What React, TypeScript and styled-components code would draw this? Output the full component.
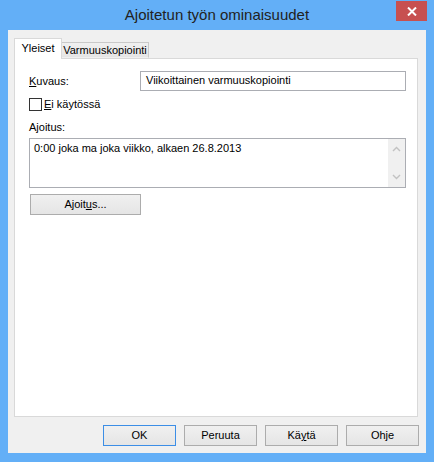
import React from "react";
import styled, { createGlobalStyle } from "styled-components";

const GlobalStyle = createGlobalStyle`
  html, body {
    margin: 0;
    padding: 0;
    width: 434px;
    height: 462px;
    overflow: hidden;
    background: #63aff7;
  }
  * { box-sizing: border-box; }
`;

const Window = styled.div`
  width: 434px;
  height: 462px;
  background: #63aff7;
  display: flex;
  flex-direction: column;
  font-family: "Liberation Sans", Arial, sans-serif;
  font-size: 11px;
  color: #000;
`;

const TitleBar = styled.div`
  position: relative;
  height: 30px;
  flex: none;
  display: flex;
  align-items: center;
  justify-content: center;
`;

const Title = styled.div`
  font-size: 15px;
  line-height: 30px;
  color: #222;
`;

const CloseButton = styled.div`
  position: absolute;
  top: 1px;
  right: 7px;
  width: 31px;
  height: 20px;
  background: #c75050;
  display: flex;
  align-items: center;
  justify-content: center;
`;

const Client = styled.div`
  flex: 1;
  margin: 0 8px 9px 8px;
  background: #f0f0f0;
  display: flex;
  flex-direction: column;
  padding: 8px 7px 7px 6px;
`;

const TabArea = styled.div`
  margin-right: 1px;
  display: flex;
  flex-direction: column;
`;

const TabStrip = styled.div`
  height: 20px;
  display: flex;
  align-items: flex-end;
  position: relative;
  z-index: 1;
`;

const Tab = styled.div<{ $selected?: boolean; $width: number }>`
  width: ${(p) => p.$width}px;
  height: ${(p) => (p.$selected ? 21 : 16)}px;
  margin-bottom: ${(p) => (p.$selected ? -1 : 0)}px;
  border: 1px solid ${(p) => (p.$selected ? "#d9d9d9" : "#c9c9c9")};
  border-bottom: ${(p) => (p.$selected ? "none" : "1px solid transparent")};
  border-left: ${(p) => (p.$selected ? "1px solid #d9d9d9" : "none")};
  background: ${(p) =>
    p.$selected ? "#ffffff" : "linear-gradient(#f0f0f0, #e5e5e5)"};
  padding-top: ${(p) => (p.$selected ? 3 : 1)}px;
  line-height: 13px;
  text-align: center;
  white-space: nowrap;
`;

const TabPanel = styled.div`
  height: 359px;
  border: 1px solid #d9d9d9;
  background: #fff;
  padding: 12px 11px 0 14px;
  display: flex;
  flex-direction: column;
  align-items: flex-start;
`;

const FieldRow = styled.div`
  align-self: stretch;
  display: flex;
  align-items: center;
  height: 20px;
`;

const FieldLabel = styled.div`
  width: 111px;
  line-height: 13px;
  padding-top: 1px;
`;

const TextBox = styled.div`
  flex: 1;
  height: 20px;
  border: 1px solid #abadb3;
  padding-left: 5px;
  line-height: 17px;
  white-space: nowrap;
`;

const CheckRow = styled.div`
  margin-top: 7px;
  display: flex;
  align-items: center;
  gap: 2px;
  height: 13px;
`;

const CheckBox = styled.div`
  width: 13px;
  height: 13px;
  border: 1px solid #333;
  background: #fff;
`;

const Text = styled.span`
  line-height: 13px;
`;

const SectionLabel = styled.div`
  margin-top: 10px;
  line-height: 13px;
`;

const ScheduleBox = styled.div`
  margin-top: 4px;
  align-self: stretch;
  height: 50px;
  border: 1px solid #abadb3;
  display: flex;
`;

const ScheduleText = styled.div`
  flex: 1;
  padding: 3px 4px;
  line-height: 13px;
`;

const ScrollBar = styled.div`
  width: 17px;
  background: #f0f0f0;
  display: flex;
  flex-direction: column;
  justify-content: space-between;
`;

const ScrollArrow = styled.div`
  height: 20px;
  display: flex;
  align-items: center;
  justify-content: center;
`;

const Button = styled.div<{ $width: number; $default?: boolean }>`
  width: ${(p) => p.$width}px;
  height: 21px;
  border: 1px solid ${(p) => (p.$default ? "#3c8ee6" : "#acacac")};
  background: linear-gradient(#f0f0f0, #e5e5e5);
  display: flex;
  align-items: center;
  justify-content: center;
  line-height: 13px;
  white-space: nowrap;
`;

const ScheduleButton = styled(Button)`
  margin-top: 6px;
  margin-left: 1px;
`;

const ButtonRow = styled.div`
  margin-top: 8px;
  display: flex;
  justify-content: flex-end;
  gap: 8px;
`;

const Accel = styled.span`
  text-decoration: underline;
  text-underline-offset: 1px;
`;

const Chevron = ({ up }: { up?: boolean }) => (
  <svg width="9" height="6" viewBox="0 0 9 6">
    <polyline
      points={up ? "1,5 4.5,1.5 8,5" : "1,1 4.5,4.5 8,1"}
      fill="none"
      stroke="#c2c2c2"
      strokeWidth="1.4"
    />
  </svg>
);

export default function App() {
  return (
    <>
      <GlobalStyle />
      <Window>
        <TitleBar>
          <Title>Ajoitetun työn ominaisuudet</Title>
          <CloseButton>
            <svg width="10" height="9" viewBox="0 0 10 9">
              <path d="M1 0.5 L9 8.5 M9 0.5 L1 8.5" stroke="#fff" strokeWidth="2" />
            </svg>
          </CloseButton>
        </TitleBar>
        <Client>
          <TabArea>
            <TabStrip>
              <Tab $selected $width={48}>Yleiset</Tab>
              <Tab $width={87}>Varmuuskopiointi</Tab>
            </TabStrip>
            <TabPanel>
              <FieldRow>
                <FieldLabel>
                  <Accel>K</Accel>uvaus:
                </FieldLabel>
                <TextBox>Viikoittainen varmuuskopiointi</TextBox>
              </FieldRow>
              <CheckRow>
                <CheckBox />
                <Text>
                  <Accel>E</Accel>i käytössä
                </Text>
              </CheckRow>
              <SectionLabel>Ajoitus:</SectionLabel>
              <ScheduleBox>
                <ScheduleText>0:00 joka ma joka viikko, alkaen 26.8.2013</ScheduleText>
                <ScrollBar>
                  <ScrollArrow>
                    <Chevron up />
                  </ScrollArrow>
                  <ScrollArrow>
                    <Chevron />
                  </ScrollArrow>
                </ScrollBar>
              </ScheduleBox>
              <ScheduleButton $width={111}>
                Ajoit<Accel>u</Accel>s...
              </ScheduleButton>
            </TabPanel>
          </TabArea>
          <ButtonRow>
            <Button $width={73} $default>OK</Button>
            <Button $width={73}>Peruuta</Button>
            <Button $width={73}>
              Kä<Accel>y</Accel>tä
            </Button>
            <Button $width={73}>Ohje</Button>
          </ButtonRow>
        </Client>
      </Window>
    </>
  );
}
